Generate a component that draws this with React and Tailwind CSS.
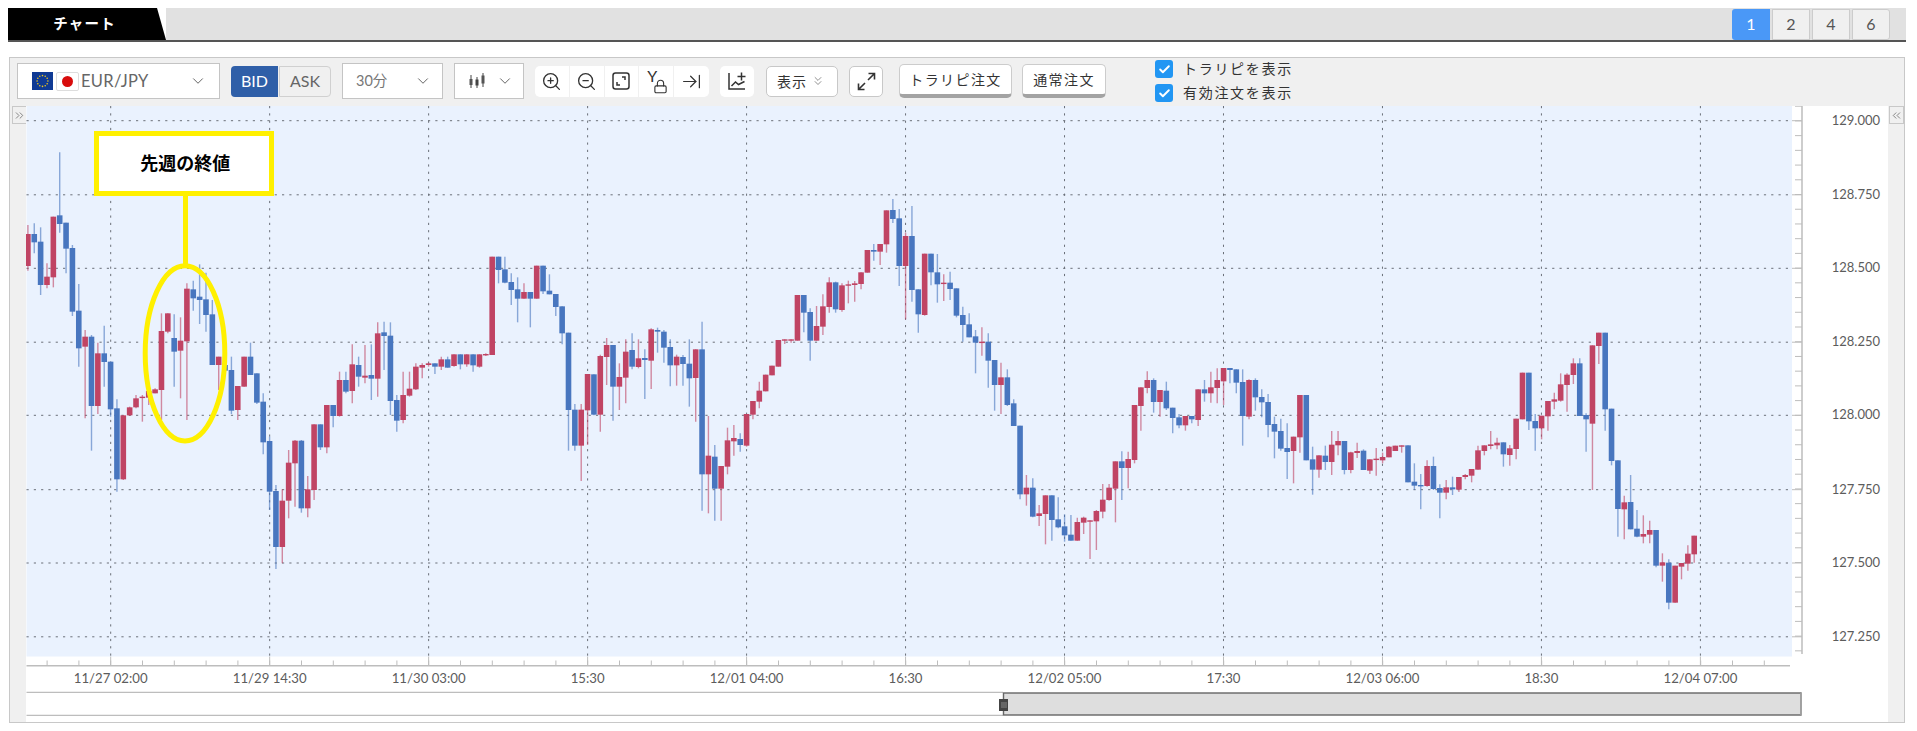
import { ZoomIn, ZoomOut, ArrowRightToLine, ChevronDown, ChevronsDown, ChevronsLeft, ChevronsRight, Lock, Check } from 'lucide-react'

// candles as [colour, bodyTop, bodyBottom, wickTop, wickBottom], read off the chart in 3x pixels
const R = 'r'
const B = 'b'
const sections = [
  { base: 100, rows: [
    [R,402,498,375,512],[B,402,427,370,460],[B,425,555,382,585],[R,530,555,490,565],[R,350,532,350,562],[B,346,372,157,398],[B,368,446,368,520],[B,444,635,435,648],[B,632,745,552,800],[R,710,740,690,955],
    [B,710,918,705,1052],[R,760,918,728,942],[B,760,786,677,860],[B,785,928,785,950],[B,925,1138,898,1175],[R,946,1138,946,1140],[R,922,946,920,948],[R,895,922,885,925],[R,890,893,885,965],[R,873,893,865,915],
    [R,868,880,865,880],[R,693,870,640,960],[R,640,695,640,700],[B,714,755,643,860],[R,722,752,652,895],[R,566,724,550,960],[B,568,595,542,632],[B,590,600,493,672],[B,598,645,518,695],[B,643,795,600,795],
    [R,770,795,770,870],[B,795,812,765,815],[B,810,932,770,942],[R,858,930,858,960],[R,770,860,770,860],[B,770,825,728,825],[B,820,908,820,912],[B,905,1027,880,1063],[B,1023,1175,1010,1230],[B,1173,1341,1155,1407],
    [R,1202,1341,1168,1390],[R,1088,1202,1050,1255],[R,1022,1090,1020,1220],[B,1022,1225,1020,1238],[R,1168,1225,1128,1252],[R,973,1170,973,1200],[B,973,1042,973,1050],[R,915,1042,915,1060],[B,915,948,915,982],[R,840,948,815,950],
    [B,840,875,815,880],[R,793,873,733,910],[B,795,830,770,860],[R,827,833,735,850],[B,825,836,733,900],[R,700,836,667,890],[B,697,708,665,810],[B,707,903,667,945],[B,900,962,885,995],[R,885,960,815,970],
    [R,866,887,815,890],[R,800,868,790,870],[R,795,803,790,835],[R,790,795,788,800],[B,790,800,790,822],[R,778,800,770,810],[B,778,803,770,803],[R,763,798,763,800],[B,763,793,763,808],[R,763,793,763,800],
    [B,763,796,763,815],[R,763,800,763,803],[R,762,765,760,768],[R,470,765,470,765],[B,470,510,470,550],
  ] },
  { base: 220, rows: [
    [B,148,188,110,190],[B,186,210,160,255],[B,208,236,172,307],[R,216,236,190,236],[B,216,236,216,322],[R,137,236,137,236],[B,137,214,137,222],[B,212,223,163,223],[B,222,261,222,288],[B,259,340,259,373],
    [B,338,570,338,692],[B,569,677,552,692],[R,569,677,552,783],[R,462,571,462,675],[B,463,584,463,586],[R,408,584,404,635],[R,375,411,354,495],[B,375,500,375,602],[R,471,500,430,570],[R,395,473,358,550],
    [B,390,440,340,448],[R,415,441,358,445],[B,414,420,388,537],[R,328,422,325,507],[B,330,335,323,398],[B,335,383,330,428],[B,381,436,358,499],[R,410,436,404,497],[B,411,432,405,497],[B,431,475,358,560],
    [R,388,474,388,605],[B,388,763,305,872],[R,707,763,588,880],[B,710,806,675,902],[R,738,806,738,902],[R,661,740,623,763],[R,654,664,615,707],[B,657,675,640,695],[R,582,677,582,680],[R,543,584,543,598],
    [R,512,545,485,565],[R,464,514,464,514],[R,437,466,437,466],[R,360,440,360,440],[R,358,362,358,372],[R,358,362,358,368],[R,225,362,225,362],[B,225,278,225,337],[B,276,362,265,422],[R,318,362,258,362],
    [R,259,320,223,345],[R,187,261,172,278],[B,187,268,185,278],[R,196,270,190,275],[R,193,197,182,250],[R,190,195,183,245],[R,157,192,157,208],[R,90,158,90,158],[B,90,95,72,122],[R,72,95,72,135],
    [R,-29,73,-29,98],[B,-30,-3,-63,9],[B,-5,138,-33,198],[R,48,138,38,298],[B,48,210,-42,245],[B,208,283,208,338],[R,101,285,101,287],[B,101,157,101,196],[B,157,193,102,248],[R,188,192,163,243],
    [B,188,207,155,240],[B,205,287,205,292],[B,285,315,260,365],[B,313,352,280,352],[B,349,368,330,460],[R,365,369,322,407],[B,365,422,340,503],[B,420,495,420,572],
  ] },
  { base: 300, rows: [
    [R,232,255,188,342],[B,232,315,208,318],[B,310,378,298,378],[B,377,583,377,598],[R,563,583,525,617],[B,563,650,535,652],[R,640,648,615,678],[R,586,642,586,733],[B,586,660,586,722],[B,658,682,592,685],
    [B,679,706,643,725],[B,704,722,645,722],[R,666,722,653,722],[R,653,668,650,702],[R,661,665,661,777],[R,633,664,630,750],[R,599,635,552,655],[R,563,600,552,602],[R,484,566,484,667],[B,484,504,454,600],
    [R,477,504,455,565],[R,315,480,315,490],[R,262,318,262,392],[R,240,264,214,280],[B,240,306,235,338],[R,270,306,270,350],[B,272,325,245,330],[B,323,354,323,400],[B,352,376,342,385],[R,348,376,348,392],
    [B,348,358,348,370],[R,268,360,268,378],[B,268,280,240,305],[R,262,280,215,308],[R,240,264,205,310],[R,204,244,204,315],[B,204,210,204,250],[B,208,248,208,280],[B,246,348,208,437],[R,240,350,238,358],
    [B,240,292,235,332],[B,291,307,268,352],[B,306,375,282,412],[B,372,395,350,475],[B,393,446,356,452],[B,444,456,370,537],[R,410,453,410,550],[R,285,412,285,458],[B,285,481,285,481],[B,478,509,440,584],
    [R,466,509,466,533],[B,467,486,437,510],[R,434,486,393,525],[R,423,436,393,466],[B,423,510,423,523],[R,457,510,455,520],[R,453,459,428,474],[B,452,510,448,510],[R,478,512,478,522],[R,476,480,444,527],
    [R,471,481,458,490],[R,440,472,438,472],[R,437,453,437,453],[R,436,439,436,458],[B,436,547,436,547],[B,545,557,490,570],[B,555,558,522,628],[R,498,558,481,560],[B,498,567,470,570],[B,564,578,553,655],
    [R,562,578,540,598],[B,562,568,530,585],[R,531,569,531,576],[R,525,531,522,538],[R,507,527,507,547],[R,451,509,437,509],[R,436,453,436,466],[R,433,438,393,448],[R,428,436,413,448],
  ] },
  { base: 320, rows: [
    [B,367,403,367,440],[R,385,405,375,437],[R,296,387,296,418],[R,158,298,158,298],[B,158,304,158,330],[B,303,325,282,392],[R,287,325,287,358],[R,243,289,243,332],[R,238,245,218,268],[R,193,242,160,245],
    [R,164,195,160,275],[R,130,165,115,192],[B,130,288,115,288],[B,285,298,280,395],[R,76,311,76,510],[R,38,78,38,132],[B,38,268,38,332],[B,266,423,266,436],[B,421,567,421,650],[R,547,568,527,658],
    [B,546,628,465,628],[B,626,650,570,652],[R,642,650,586,670],[R,630,644,602,670],[B,630,737,630,742],[R,727,737,700,785],[B,728,848,718,868],[R,737,848,737,848],[R,729,740,729,778],[R,701,731,676,752],[R,647,703,647,728],
  ] },
]

const candles = sections.flatMap((s) =>
  s.rows.map(([c, top, bottom, hi, lo]) => ({
    c,
    top: s.base + top / 3,
    bottom: s.base + bottom / 3,
    hi: s.base + hi / 3,
    lo: s.base + lo / 3,
  }))
)

const gridX = Array.from({ length: 11 }, (_, k) => 110.7 + 158.97 * k)
const gridY = [120.7, 194.8, 268.3, 342.2, 415.3, 489.7, 563, 636.8]
const prices = ['129.000', '128.750', '128.500', '128.250', '128.000', '127.750', '127.500', '127.250']
const times = ['11/27 02:00', '11/29 14:30', '11/30 03:00', '15:30', '12/01 04:00', '16:30', '12/02 05:00', '17:30', '12/03 06:00', '18:30', '12/04 07:00']
const UP = '#c04464'
const DOWN = '#4876bf'
const AXIS = '#bdbdbd'

function ChartSvg() {
  const xMinor = Array.from({ length: 56 }, (_, k) => 15.3 + 31.8 * k).filter((x) => x > 27 && x < 1790)
  const yMinor = Array.from({ length: 38 }, (_, k) => 106.2 + 14.72 * k)
  return (
    <svg viewBox="26 106 1862 616" className="block h-full w-full">
      <rect x="26.5" y="106" width="1765.5" height="550.5" fill="#eaf2fe" />

      {gridY.map((y) => (
        <line key={y} x1="26.5" x2="1792" y1={y} y2={y} stroke="#6a6f78" strokeDasharray="2.2 5.1" />
      ))}
      {gridX.map((x) => (
        <line key={x} x1={x} x2={x} y1="106" y2="656.5" stroke="#6a6f78" strokeDasharray="2.2 5.1" />
      ))}

      {candles.map((d, i) => {
        const x = 27.9 + 6.36 * i
        const color = d.c === 'r' ? UP : DOWN
        return (
          <g key={i}>
            <line x1={x} x2={x} y1={d.hi} y2={d.lo} stroke={color} strokeWidth="1.4" opacity="0.6" />
            <rect x={x - 2.8} y={d.top} width="5.6" height={Math.max(d.bottom - d.top, 1.4)} fill={color} />
          </g>
        )
      })}

      {/* price axis */}
      <line x1="1802" x2="1802" y1="106" y2="654" stroke={AXIS} strokeWidth="1.5" />
      {yMinor.map((y) => (
        <line key={y} x1="1795" x2="1802" y1={y} y2={y} stroke={AXIS} />
      ))}
      {gridY.map((y) => (
        <line key={y} x1="1792" x2="1802" y1={y} y2={y} stroke={AXIS} />
      ))}
      {prices.map((p, i) => (
        <text key={p} x="1880" y={gridY[i] + 3.8} textAnchor="end" fontSize="13" fill="#5c5c5c" fontFamily="Lato, sans-serif">
          {p}
        </text>
      ))}

      {/* time axis */}
      <line x1="26.5" x2="1790" y1="665.8" y2="665.8" stroke={AXIS} strokeWidth="1.5" />
      {xMinor.map((x) => (
        <line key={x} x1={x} x2={x} y1="660.5" y2="666" stroke={AXIS} />
      ))}
      {gridX.map((x) => (
        <line key={x} x1={x} x2={x} y1="656.5" y2="666" stroke={AXIS} />
      ))}
      {times.map((t, i) => (
        <text key={t} x={gridX[i]} y="683" textAnchor="middle" fontSize="13.2" fill="#5c5c5c" fontFamily="Lato, sans-serif">
          {t}
        </text>
      ))}

      {/* navigator */}
      <line x1="26.5" x2="1003" y1="692.3" y2="692.3" stroke={AXIS} strokeWidth="1.2" />
      <line x1="26.5" x2="1003" y1="715.3" y2="715.3" stroke={AXIS} strokeWidth="1.2" />
      <rect x="1003.5" y="693" width="797.5" height="22" fill="#dedede" stroke="#666" strokeWidth="1.4" />
      <line x1="1801" x2="1801" y1="693" y2="715" stroke="#aaa" strokeWidth="1.4" />
      <rect x="999" y="699" width="9" height="12" fill="#444" />
      <path d="M1002 702v6M1004 702v6M1006 702v6" stroke="#999" strokeWidth="0.8" />

      {/* annotation */}
      <line x1="185.5" x2="185.5" y1="195" y2="266" stroke="#fff000" strokeWidth="5" />
      <ellipse cx="185" cy="353.3" rx="39.8" ry="87.6" fill="none" stroke="#fff000" strokeWidth="5" />
    </svg>
  )
}

function EuFlag() {
  const stars = Array.from({ length: 12 }, (_, k) => (k * Math.PI) / 6)
  return (
    <svg width="21" height="18" viewBox="0 0 21 18" className="shrink-0">
      <rect width="21" height="18" fill="#0f3a94" />
      {stars.map((a) => (
        <circle key={a} cx={10.5 + 5.4 * Math.cos(a)} cy={9 + 5.4 * Math.sin(a)} r="0.8" fill="#f2c91c" />
      ))}
    </svg>
  )
}

function JpFlag() {
  return (
    <span className="flex h-[19px] w-[23px] shrink-0 items-center justify-center rounded-[2px] border border-[#ddd] bg-white">
      <span className="h-[11px] w-[11px] rounded-full bg-[#d80c0c]" />
    </span>
  )
}

function Select({ className, children, chevronClass }) {
  return (
    <div className={`relative flex h-[36px] items-center border border-[#c4c4c4] bg-white ${className}`}>
      {children}
      <ChevronDown size={18} strokeWidth={1.2} className={`absolute text-[#555] ${chevronClass}`} />
    </div>
  )
}

function IconCell({ children, last }) {
  return (
    <div className={`flex h-full w-[35px] items-center justify-center text-[#333] ${last ? '' : 'border-r border-[#f0f0f0]'}`}>
      {children}
    </div>
  )
}

function Checkbox({ label }) {
  return (
    <label className="flex h-[18px] items-center gap-[10px]">
      <span className="flex h-[18px] w-[18px] items-center justify-center rounded-[3px] bg-[#2196f3]">
        <Check size={13} strokeWidth={3.5} className="text-white" />
      </span>
      <span className="text-[14px] leading-none tracking-[1.7px] text-[#333]">{label}</span>
    </label>
  )
}

export default function App() {
  return (
    <div className="h-[731px] w-[1917px] overflow-hidden bg-white pt-[8px] font-['Lato','Noto_Sans_CJK_JP',sans-serif]">
      {/* tab bar */}
      <div className="ml-[8px] flex h-[34px] w-[1898px] border-b-2 border-[#555]">
        <div className="flex w-[158px] items-center justify-center bg-black pr-[5px] text-[14.5px] font-bold tracking-[1.2px] text-white [clip-path:polygon(0_0,149px_0,100%_100%,0_100%)]">
          チャート
        </div>
        <div className="flex flex-1 items-center justify-end gap-[2px] bg-[#e1e1e1] pr-[16px]">
          <div className="flex h-[31px] w-[38px] items-center justify-center rounded-l-[3px] bg-[#4a98f7] text-[16px] text-white">1</div>
          <div className="flex h-[31px] w-[38px] items-center justify-center border border-[#ccc] bg-[#f0f0f0] text-[16px] text-[#555]">2</div>
          <div className="flex h-[31px] w-[38px] items-center justify-center border border-[#ccc] bg-[#f0f0f0] text-[16px] text-[#555]">4</div>
          <div className="flex h-[31px] w-[38px] items-center justify-center rounded-r-[3px] border border-[#ccc] bg-[#f0f0f0] text-[16px] text-[#555]">6</div>
        </div>
      </div>

      {/* chart panel */}
      <div className="ml-[9px] mt-[15px] w-[1896px] border border-[#c8c8c8] bg-[#f0f0f0]">
        {/* toolbar */}
        <div className="flex h-[48px] items-center pb-[2px] pl-[7px]">
          <Select className="w-[203px] pl-[14px]" chevronClass="right-[12px]">
            <EuFlag />
            <span className="ml-[3px]"><JpFlag /></span>
            <span className="ml-[2px] text-[16.5px] tracking-[0.3px] text-[#666]">EUR/JPY</span>
          </Select>

          <div className="ml-[11px] flex h-[31px] w-[100px] text-[16px]">
            <div className="flex w-[47px] items-center justify-center rounded-l-[4px] bg-[#2f5fa8] text-white">BID</div>
            <div className="ml-[1px] flex flex-1 items-center justify-center rounded-r-[4px] border border-[#d0d0d0] bg-[#f0f0f0] text-[#666]">ASK</div>
          </div>

          <Select className="ml-[11px] w-[101px] pl-[13px]" chevronClass="right-[10px]">
            <span className="text-[14.5px] text-[#777]">30分</span>
          </Select>

          <Select className="ml-[11px] w-[70px] pl-[13px]" chevronClass="right-[9px]">
            <svg width="18" height="18" viewBox="0 0 18 18">
              <path d="M3 3v13" stroke="#444" />
              <rect x="1.5" y="7" width="3" height="6" fill="#555" />
              <path d="M9 5v11" stroke="#444" />
              <rect x="7.5" y="7.5" width="3" height="6" fill="#444" />
              <path d="M15 1v14" stroke="#444" />
              <rect x="13.5" y="3.5" width="3" height="8" fill="#555" />
            </svg>
          </Select>

          <div className="ml-[11px] flex h-[31px] w-[174px] overflow-hidden rounded-[5px] bg-white">
            <IconCell><ZoomIn size={21} strokeWidth={1.5} /></IconCell>
            <IconCell><ZoomOut size={21} strokeWidth={1.5} /></IconCell>
            <IconCell>
              <svg width="18" height="18" viewBox="0 0 18 18" fill="none" stroke="#333" strokeWidth="1.5">
                <rect x="1" y="1" width="16" height="16" rx="2.5" />
                <path d="M10 5h3v3M5 10v3h3" />
              </svg>
            </IconCell>
            <IconCell>
              <span className="relative h-[22px] w-[22px]">
                <span className="absolute left-[2px] top-[-2px] text-[16px] leading-none text-[#333]">Y</span>
                <Lock size={15} strokeWidth={1.8} className="absolute bottom-[-2px] right-[-1px]" />
              </span>
            </IconCell>
            <IconCell last><ArrowRightToLine size={21} strokeWidth={1.4} /></IconCell>
          </div>

          <div className="ml-[11px] flex h-[31px] w-[34px] items-center justify-center rounded-[5px] bg-white">
            <svg width="20" height="20" viewBox="0 0 20 20" fill="none" stroke="#333" strokeWidth="1.5">
              <path d="M2 2v16h16" />
              <path d="M4.5 15l4-4 3 2.5 6-3" />
              <path d="M10.5 5.5h8M14.5 1.5v8" />
            </svg>
          </div>

          <div className="ml-[12px] flex h-[31px] w-[72px] items-center justify-center gap-[4px] rounded-[5px] border border-[#c8c8c8] bg-white pr-[2px] text-[14px] tracking-[1px] text-[#333]">
            表示
            <ChevronsDown size={14} strokeWidth={1.4} className="text-[#777]" />
          </div>

          <div className="ml-[11px] flex h-[31px] w-[34px] items-center justify-center rounded-[5px] border border-[#c8c8c8] bg-white">
            <svg width="19" height="19" viewBox="0 0 19 19" fill="none" stroke="#333" strokeWidth="1.6">
              <path d="M11 8l6.5-6.5M11.5 1.5h6v6" />
              <path d="M8 11l-6.5 6.5M7.5 17.5h-6v-6" />
            </svg>
          </div>

          <div className="ml-[16px] flex h-[34px] w-[113px] items-center justify-center rounded-[5px] border border-b-[4px] border-[#ccc] border-b-[#a3a3a3] bg-white text-[14px] tracking-[1.4px] text-[#333]">
            トラリピ注文
          </div>
          <div className="ml-[10px] flex h-[34px] w-[84px] items-center justify-center rounded-[5px] border border-b-[4px] border-[#ccc] border-b-[#a3a3a3] bg-white text-[14px] tracking-[1.4px] text-[#333]">
            通常注文
          </div>

          <div className="ml-[49px] flex flex-col gap-[6px]">
            <Checkbox label="トラリピを表示" />
            <Checkbox label="有効注文を表示" />
          </div>
        </div>

        {/* chart body */}
        <div className="flex h-[616px]">
          <div className="w-[16px] pl-[2px]">
            <div className="flex h-[18px] w-[14px] items-center justify-center border border-r-0 border-[#c8c8c8] text-[#666]">
              <ChevronsRight size={15} strokeWidth={1.4} />
            </div>
          </div>

          <div className="relative w-[1862px] bg-white">
            <ChartSvg />
            <div className="absolute left-[68px] top-[25px] flex h-[65px] w-[179.5px] items-center justify-center border-[5px] border-[#fff000] bg-white pl-[3px] text-[18px] font-bold text-black">
              先週の終値
            </div>
          </div>

          <div className="w-[16px] pl-[1px]">
            <div className="flex h-[18px] w-[15px] items-center justify-center border border-[#c8c8c8] text-[#666]">
              <ChevronsLeft size={15} strokeWidth={1.4} />
            </div>
          </div>
        </div>
      </div>
    </div>
  )
}
